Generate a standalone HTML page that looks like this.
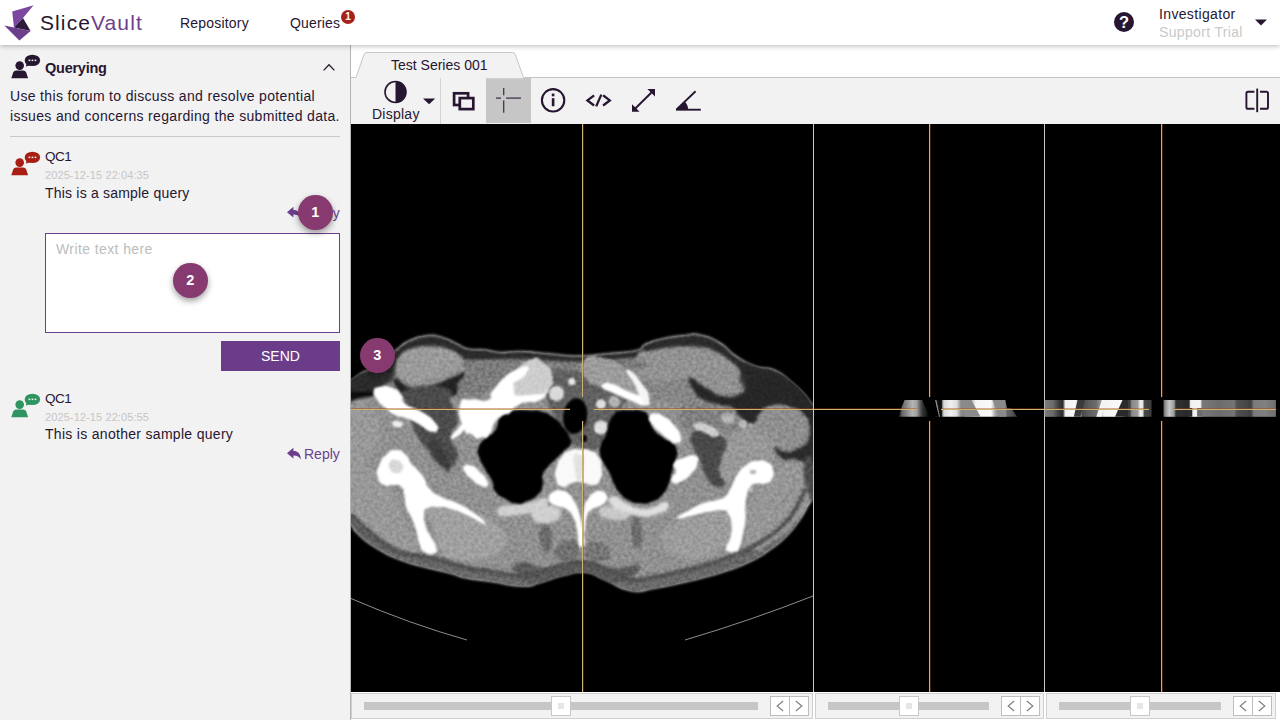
<!DOCTYPE html>
<html>
<head>
<meta charset="utf-8">
<title>SliceVault</title>
<style>
*{box-sizing:border-box;margin:0;padding:0}
html,body{width:1280px;height:720px;overflow:hidden;background:#fff;font-family:"Liberation Sans",sans-serif;color:#261631}
.abs{position:absolute}
#header{position:absolute;left:0;top:0;width:1280px;height:45px;background:#fff;box-shadow:0 1px 5px rgba(0,0,0,.28);z-index:5}
#sidebar{position:absolute;left:0;top:45px;width:351px;height:675px;background:#f2f2f2;border-right:1px solid #b4b4b4}
#main{position:absolute;left:351px;top:45px;width:929px;height:675px;background:#fff}
.t{position:absolute;white-space:nowrap;line-height:1}
#toolbar{position:absolute;left:0;top:32px;width:929px;height:47px;background:#f2f2f2;border-top:1px solid #c4c4c4}
#viewer{position:absolute;left:0;top:79px;width:929px;height:568px;background:#000;overflow:hidden}
.step{position:absolute;width:34.5px;height:35px;border-radius:50%;background:#863a6f;color:#fff;font-weight:bold;font-size:14.5px;text-align:center;line-height:35px;box-shadow:0 3px 6px rgba(0,0,0,.38);z-index:9}
.sl{position:absolute;top:648px;height:26px;background:#f2f2f2;border:1px solid #d0d0d0}
.sl .tr{position:absolute;top:8px;height:8px;background:#c6c6c6}
.sl .th{position:absolute;top:2px;width:20px;height:20px;background:#fff;border:1px solid #c8c8c8}
.sl .th i{position:absolute;left:6px;top:6px;width:6px;height:6px;background:#e6e6e6}
.sl .bt{position:absolute;top:2px;width:39px;height:20px;background:#fff;border:1px solid #bdbdbd}
.sl .bt:after{content:"";position:absolute;left:18px;top:0;width:1px;height:18px;background:#bdbdbd}
</style>
</head>
<body>
<!-- HEADER -->
<div id="header">
<svg class="abs" style="left:0;top:0" width="60" height="45" viewBox="0 0 60 45">
<polygon points="12.2,11.4 33.6,5.2 23,18 14,27.4" fill="#7b479f"/>
<polygon points="23,18 30.6,31 14,27.4" fill="#2d1a3d"/>
<polygon points="4.4,25.4 30.6,31 19.4,40.6" fill="#6c3f8c"/>
</svg>
<div class="t" id="lg1" style="left:40px;top:12px;font-size:21px;letter-spacing:1.1px;color:#261631">Slice<span style="color:#6c3f8c">Vault</span></div>
<div class="t" id="nav1" style="left:180px;top:16px;font-size:14px;letter-spacing:.2px">Repository</div>
<div class="t" id="nav2" style="left:290px;top:16px;font-size:14px;letter-spacing:.15px">Queries</div>
<div class="abs" style="left:341px;top:10px;width:14px;height:14px;border-radius:7px;background:#a8201a;color:#fff;font-size:10px;font-weight:bold;text-align:center;line-height:14px">1</div>
<svg class="abs" style="left:1113px;top:11px" width="22" height="22" viewBox="0 0 22 22"><circle cx="11" cy="11" r="10" fill="#261631"/><text x="11" y="16.7" font-family="Liberation Sans" font-weight="bold" font-size="16.5" text-anchor="middle" fill="#fff">?</text></svg>
<div class="t" id="inv" style="left:1159px;top:7px;font-size:14px;letter-spacing:.35px">Investigator</div>
<div class="t" id="sup" style="left:1159px;top:25px;font-size:14px;letter-spacing:.34px;color:#c9c9c9">Support Trial</div>
<svg class="abs" style="left:1254px;top:19px" width="14" height="8" viewBox="0 0 14 8"><polygon points="1,0.5 13,0.5 7,6.5" fill="#261631"/></svg>
</div>

<!-- SIDEBAR -->
<div id="sidebar">
<svg class="abs" style="left:9px;top:8px" width="34" height="28" viewBox="9 53 34 28">
<g fill="#261631"><ellipse cx="32.4" cy="60.4" rx="7.7" ry="5.7"/><polygon points="27,62 25.8,66.6 31,65"/><circle cx="19.7" cy="65.6" r="4.3"/><path d="M11.3 78.2 L13.2 72.6 Q14 70.6 16.2 70.6 L23.2 70.6 Q25.4 70.6 26.2 72.6 L28.1 78.2 Z"/></g>
<g fill="#f2f2f2"><rect x="28.6" y="59.6" width="1.7" height="1.5"/><rect x="31.6" y="59.6" width="1.7" height="1.5"/><rect x="34.6" y="59.6" width="1.7" height="1.5"/></g>
</svg>
<div class="t" id="qh" style="left:45px;top:15.5px;font-size:14.5px;letter-spacing:-.25px;font-weight:bold">Querying</div>
<svg class="abs" style="left:321px;top:16px" width="16" height="12" viewBox="0 0 16 12"><polyline points="2.6,9.4 8,3.7 13.4,9.4" fill="none" stroke="#261631" stroke-width="1.25"/></svg>
<div class="t" id="p1" style="left:10px;top:44px;font-size:14px;letter-spacing:.33px">Use this forum to discuss and resolve potential</div>
<div class="t" id="p2" style="left:10px;top:64px;font-size:14px;letter-spacing:.33px">issues and concerns regarding the submitted data.</div>
<div class="abs" style="left:10px;top:91px;width:330px;height:1px;background:#c9c9c9"></div>

<svg class="abs" style="left:9px;top:105.2px" width="34" height="28" viewBox="9 53 34 28">
<g fill="#a81e12"><ellipse cx="32.4" cy="60.4" rx="7.7" ry="5.7"/><polygon points="27,62 25.8,66.6 31,65"/><circle cx="19.7" cy="65.6" r="4.3"/><path d="M11.3 78.2 L13.2 72.6 Q14 70.6 16.2 70.6 L23.2 70.6 Q25.4 70.6 26.2 72.6 L28.1 78.2 Z"/></g>
<g fill="#f2f2f2"><rect x="28.6" y="59.6" width="1.7" height="1.5"/><rect x="31.6" y="59.6" width="1.7" height="1.5"/><rect x="34.6" y="59.6" width="1.7" height="1.5"/></g>
</svg>
<div class="t" id="q1n" style="left:45px;top:105px;font-size:13.5px;letter-spacing:-.5px">QC1</div>
<div class="t" id="q1d" style="left:45px;top:125px;font-size:11px;letter-spacing:.1px;color:#c6c6c6">2025-12-15 22:04:35</div>
<div class="t" id="q1t" style="left:45px;top:141px;font-size:14px;letter-spacing:.2px">This is a sample query</div>
<svg class="abs" style="left:286px;top:161px" width="16" height="14" viewBox="0 0 16 14"><path d="M1 6.2 L7.4 0.8 V4 C12 4 14.6 6.6 14.8 12.4 C13.4 9.6 11.4 8.4 7.4 8.4 V11.6 Z" fill="#6c3f8c"/></svg>
<div class="t" id="r1" style="left:304px;top:160.5px;font-size:14px;color:#6c3f8c">Reply</div>
<div class="abs" style="left:45px;top:188px;width:295px;height:100px;background:#fff;border:1px solid #6c3f8c"></div>
<div class="t" id="ph" style="left:56px;top:197px;font-size:14px;letter-spacing:.4px;color:#bdbdbd">Write text here</div>
<div class="abs" style="left:221px;top:296px;width:119px;height:30px;background:#6a3c8a"></div>
<div class="t" id="snd" style="left:261px;top:304px;font-size:14px;color:#fff">SEND</div>

<svg class="abs" style="left:9px;top:347.2px" width="34" height="28" viewBox="9 53 34 28">
<g fill="#2e9460"><ellipse cx="32.4" cy="60.4" rx="7.7" ry="5.7"/><polygon points="27,62 25.8,66.6 31,65"/><circle cx="19.7" cy="65.6" r="4.3"/><path d="M11.3 78.2 L13.2 72.6 Q14 70.6 16.2 70.6 L23.2 70.6 Q25.4 70.6 26.2 72.6 L28.1 78.2 Z"/></g>
<g fill="#f2f2f2"><rect x="28.6" y="59.6" width="1.7" height="1.5"/><rect x="31.6" y="59.6" width="1.7" height="1.5"/><rect x="34.6" y="59.6" width="1.7" height="1.5"/></g>
</svg>
<div class="t" id="q2n" style="left:45px;top:347px;font-size:13.5px;letter-spacing:-.5px">QC1</div>
<div class="t" id="q2d" style="left:45px;top:367px;font-size:11px;letter-spacing:.1px;color:#c6c6c6">2025-12-15 22:05:55</div>
<div class="t" id="q2t" style="left:45px;top:382px;font-size:14px;letter-spacing:.3px">This is another sample query</div>
<svg class="abs" style="left:286px;top:402px" width="16" height="14" viewBox="0 0 16 14"><path d="M1 6.2 L7.4 0.8 V4 C12 4 14.6 6.6 14.8 12.4 C13.4 9.6 11.4 8.4 7.4 8.4 V11.6 Z" fill="#6c3f8c"/></svg>
<div class="t" id="r2" style="left:304px;top:401.5px;font-size:14px;color:#6c3f8c">Reply</div>
<div class="step" style="left:298px;top:150px">1</div>
<div class="step" style="left:173px;top:218px">2</div>
</div>

<!-- MAIN -->
<div id="main">
<svg class="abs" style="left:0;top:0;z-index:2" width="200" height="34" viewBox="351 45 200 34"><path d="M355.8 78.2 L364 54.5 Q364.8 52.5 367 52.5 H512.5 Q514.6 52.5 515.3 54.5 L523.6 78.2 Z" fill="#f2f2f2"/><path d="M351 77.5 H356 L364 54.5 Q364.8 52.5 367 52.5 H512.5 Q514.6 52.5 515.3 54.5 L523.4 77.5" fill="none" stroke="#c6c6c6" stroke-width="1"/></svg>
<div class="t" id="tab" style="z-index:3;left:40px;top:13px;font-size:14px;letter-spacing:0">Test Series 001</div>
<div id="toolbar">
<svg class="abs" style="left:0;top:0" width="929" height="46" viewBox="351 78 929 46">
<g fill="none" stroke="#261631">
<circle cx="395.5" cy="92" r="10.5" stroke-width="1.6"/>
<path d="M395.5 81.5 A10.5 10.5 0 0 1 395.5 102.5 Z" fill="#261631" stroke="none"/>
<polygon points="423,98.4 435.2,98.4 429.1,104.3" fill="#261631" stroke="none"/>
<line x1="440.5" y1="78" x2="440.5" y2="124" stroke="#d2d2d2" stroke-width="1"/>
<rect x="454.1" y="93.3" width="14" height="11.7" stroke-width="2.7"/>
<rect x="459.8" y="98.1" width="13.5" height="11" stroke-width="2.7" fill="#f2f2f2"/>
<rect x="486" y="78" width="45" height="45" fill="#c6c6c6" stroke="none"/>
<g stroke="#44334d" stroke-width="1.3"><line x1="503.7" y1="88" x2="503.7" y2="95.2"/><line x1="503.7" y1="100.6" x2="503.7" y2="112.8"/><line x1="496" y1="98.1" x2="501" y2="98.1"/><line x1="506" y1="98.1" x2="521" y2="98.1"/></g>
<circle cx="553.1" cy="100.3" r="11.2" stroke-width="2.1"/>
<rect x="551.8" y="98.2" width="2.6" height="8" fill="#261631" stroke="none"/><rect x="551.8" y="93.6" width="2.6" height="2.7" fill="#261631" stroke="none"/>
<g stroke-width="2.3" stroke-linecap="square"><polyline points="593.2,96 587.4,100.4 593.2,104.8" stroke-linejoin="miter"/><polyline points="604,96 609.8,100.4 604,104.8"/><line x1="601.3" y1="94.6" x2="596.2" y2="106.4" stroke-linecap="butt"/></g>
<g stroke-width="1.9"><line x1="634" y1="109.8" x2="653" y2="91"/></g>
<polygon points="632,111.8 632,104.2 639.6,111.8" fill="#261631" stroke="none"/><polygon points="655,89 655,96.6 647.4,89" fill="#261631" stroke="none"/>
<g stroke-width="1.9"><line x1="676" y1="109.7" x2="700.8" y2="109.7"/><line x1="676.6" y1="109.4" x2="695.6" y2="91.2"/></g>
<path d="M676 109.7 L684.6 101.4 A12 12 0 0 1 688.2 109.7 Z" fill="#261631" stroke="none"/>
<g stroke-width="1.9" stroke-linejoin="round"><path d="M1254.4 91.7 H1248 Q1246.4 91.7 1246.4 93.3 V107.2 Q1246.4 108.8 1248 108.8 H1254.4"/><path d="M1260 91.7 H1266.4 Q1268 91.7 1268 93.3 V107.2 Q1268 108.8 1266.4 108.8 H1260"/><line x1="1257.2" y1="88.6" x2="1257.2" y2="112.2"/></g>
</g>
</svg>
<div class="t" id="disp" style="left:21px;top:29px;font-size:14px;letter-spacing:.25px">Display</div>
</div>

<div id="viewer">
<svg class="abs" style="left:0;top:0" width="929" height="568" viewBox="351 124 929 568">
<defs>
<filter id="b1" x="-10%" y="-10%" width="120%" height="120%"><feGaussianBlur stdDeviation="0.9"/></filter>
<filter id="b15" x="-10%" y="-10%" width="120%" height="120%"><feGaussianBlur stdDeviation="1.4"/></filter>
<filter id="b2" x="-10%" y="-10%" width="120%" height="120%"><feGaussianBlur stdDeviation="2"/></filter>
<filter id="b3" x="-20%" y="-20%" width="140%" height="140%"><feGaussianBlur stdDeviation="3.5"/></filter>
<linearGradient id="gbody" gradientUnits="userSpaceOnUse" x1="0" y1="335" x2="0" y2="590"><stop offset="0" stop-color="#2a2a2a"/><stop offset=".45" stop-color="#323232"/><stop offset=".8" stop-color="#646464"/><stop offset="1" stop-color="#6c6c6c"/></linearGradient>
<filter id="grain" x="0" y="0" width="100%" height="100%" color-interpolation-filters="sRGB"><feTurbulence type="fractalNoise" baseFrequency="0.28" numOctaves="2" seed="7" result="n"/><feColorMatrix in="n" type="matrix" values="0.45 0 0 0 0.275  0.45 0 0 0 0.275  0.45 0 0 0 0.275  0 0 0 0 1"/></filter>
<clipPath id="cp1"><rect x="351" y="124" width="462" height="568"/></clipPath>
</defs>
<g clip-path="url(#cp1)">
<!-- CT-START -->
<g filter="url(#b1)"><path d="M322.0 450.0 C322.0 419.6 324.4 409.5 330.0 392.0 C335.6 374.5 337.4 387.5 343.0 384.5 C348.6 381.5 345.5 384.1 351.0 380.6 C356.5 377.1 357.1 375.3 363.5 371.5 C369.9 367.7 366.1 372.5 375.0 366.5 C383.9 360.5 388.2 355.8 397.0 349.0 C405.8 342.2 400.5 344.6 408.0 341.0 C415.5 337.4 415.9 336.6 425.0 335.5 C434.1 334.4 433.5 334.9 442.0 337.0 C450.5 339.1 450.1 340.4 457.0 343.5 C463.9 346.6 460.5 346.9 468.0 348.5 C475.5 350.1 476.5 348.6 485.0 349.5 C493.5 350.4 490.7 351.6 500.0 352.0 C509.3 352.4 509.3 350.9 520.0 351.0 C530.7 351.1 528.0 351.4 540.0 352.5 C552.0 353.6 553.8 354.2 565.0 355.0 C576.2 355.8 570.0 356.0 582.0 355.5 C594.0 355.0 595.3 354.5 610.0 353.0 C624.7 351.5 627.7 352.4 637.0 350.0 C646.3 347.6 638.3 347.1 645.0 344.0 C651.7 340.9 651.3 340.9 662.0 338.5 C672.7 336.1 674.9 336.1 685.0 335.0 C695.1 333.9 690.7 332.5 700.0 334.5 C709.3 336.5 710.7 337.0 720.0 342.5 C729.3 348.0 725.7 348.7 735.0 355.0 C744.3 361.3 744.3 362.0 755.0 366.0 C765.7 370.0 765.1 365.6 775.0 370.0 C784.9 374.4 784.0 375.8 792.0 382.5 C800.0 389.2 799.4 389.0 805.0 395.0 C810.6 401.0 806.3 398.3 813.0 405.0 C819.7 411.7 825.5 400.0 830.0 420.0 C834.5 440.0 834.5 458.9 830.0 480.0 C825.5 501.1 821.0 488.3 813.0 499.0 C805.0 509.7 807.1 510.0 800.0 520.0 C792.9 530.0 794.5 528.5 786.5 536.5 C778.5 544.5 779.2 543.5 770.0 550.0 C760.8 556.5 762.7 555.7 752.0 561.0 C741.3 566.3 742.5 565.6 730.0 570.0 C717.5 574.4 718.3 573.9 705.0 577.5 C691.7 581.1 693.3 580.6 680.0 583.5 C666.7 586.4 668.3 586.5 655.0 588.5 C641.7 590.5 643.3 593.3 630.0 591.0 C616.7 588.7 617.0 584.9 605.0 580.0 C593.0 575.1 596.5 573.6 585.0 572.5 C573.5 571.4 574.0 573.2 562.0 576.0 C550.0 578.8 550.7 580.2 540.0 583.0 C529.3 585.8 534.8 586.8 522.0 586.5 C509.2 586.2 506.7 584.1 492.0 582.0 C477.3 579.9 478.2 580.8 467.0 578.5 C455.8 576.2 461.2 576.4 450.0 573.5 C438.8 570.6 438.3 571.1 425.0 567.5 C411.7 563.9 413.3 565.3 400.0 560.0 C386.7 554.7 386.3 554.5 375.0 547.5 C363.7 540.5 364.2 540.0 357.5 533.8 C350.8 527.5 354.7 529.3 350.0 524.0 C345.3 518.7 345.3 518.8 340.0 514.0 C334.7 509.2 334.8 523.1 330.0 506.0 C325.2 488.9 322.0 480.4 322.0 450.0 Z" fill="url(#gbody)" stroke="#909090" stroke-width="1.2"/></g>
<defs><clipPath id="body2"><path d="M322.0 450.0 C322.0 419.6 324.4 409.5 330.0 392.0 C335.6 374.5 337.4 387.5 343.0 384.5 C348.6 381.5 345.5 384.1 351.0 380.6 C356.5 377.1 357.1 375.3 363.5 371.5 C369.9 367.7 366.1 372.5 375.0 366.5 C383.9 360.5 388.2 355.8 397.0 349.0 C405.8 342.2 400.5 344.6 408.0 341.0 C415.5 337.4 415.9 336.6 425.0 335.5 C434.1 334.4 433.5 334.9 442.0 337.0 C450.5 339.1 450.1 340.4 457.0 343.5 C463.9 346.6 460.5 346.9 468.0 348.5 C475.5 350.1 476.5 348.6 485.0 349.5 C493.5 350.4 490.7 351.6 500.0 352.0 C509.3 352.4 509.3 350.9 520.0 351.0 C530.7 351.1 528.0 351.4 540.0 352.5 C552.0 353.6 553.8 354.2 565.0 355.0 C576.2 355.8 570.0 356.0 582.0 355.5 C594.0 355.0 595.3 354.5 610.0 353.0 C624.7 351.5 627.7 352.4 637.0 350.0 C646.3 347.6 638.3 347.1 645.0 344.0 C651.7 340.9 651.3 340.9 662.0 338.5 C672.7 336.1 674.9 336.1 685.0 335.0 C695.1 333.9 690.7 332.5 700.0 334.5 C709.3 336.5 710.7 337.0 720.0 342.5 C729.3 348.0 725.7 348.7 735.0 355.0 C744.3 361.3 744.3 362.0 755.0 366.0 C765.7 370.0 765.1 365.6 775.0 370.0 C784.9 374.4 784.0 375.8 792.0 382.5 C800.0 389.2 799.4 389.0 805.0 395.0 C810.6 401.0 806.3 398.3 813.0 405.0 C819.7 411.7 825.5 400.0 830.0 420.0 C834.5 440.0 834.5 458.9 830.0 480.0 C825.5 501.1 821.0 488.3 813.0 499.0 C805.0 509.7 807.1 510.0 800.0 520.0 C792.9 530.0 794.5 528.5 786.5 536.5 C778.5 544.5 779.2 543.5 770.0 550.0 C760.8 556.5 762.7 555.7 752.0 561.0 C741.3 566.3 742.5 565.6 730.0 570.0 C717.5 574.4 718.3 573.9 705.0 577.5 C691.7 581.1 693.3 580.6 680.0 583.5 C666.7 586.4 668.3 586.5 655.0 588.5 C641.7 590.5 643.3 593.3 630.0 591.0 C616.7 588.7 617.0 584.9 605.0 580.0 C593.0 575.1 596.5 573.6 585.0 572.5 C573.5 571.4 574.0 573.2 562.0 576.0 C550.0 578.8 550.7 580.2 540.0 583.0 C529.3 585.8 534.8 586.8 522.0 586.5 C509.2 586.2 506.7 584.1 492.0 582.0 C477.3 579.9 478.2 580.8 467.0 578.5 C455.8 576.2 461.2 576.4 450.0 573.5 C438.8 570.6 438.3 571.1 425.0 567.5 C411.7 563.9 413.3 565.3 400.0 560.0 C386.7 554.7 386.3 554.5 375.0 547.5 C363.7 540.5 364.2 540.0 357.5 533.8 C350.8 527.5 354.7 529.3 350.0 524.0 C345.3 518.7 345.3 518.8 340.0 514.0 C334.7 509.2 334.8 523.1 330.0 506.0 C325.2 488.9 322.0 480.4 322.0 450.0 Z"/></clipPath></defs>
<g clip-path="url(#body2)">
<g filter="url(#b1)"><path d="M322.0 450.0 C322.0 419.6 324.4 409.5 330.0 392.0 C335.6 374.5 337.4 387.5 343.0 384.5 C348.6 381.5 345.5 384.1 351.0 380.6 C356.5 377.1 357.1 375.3 363.5 371.5 C369.9 367.7 366.1 372.5 375.0 366.5 C383.9 360.5 388.2 355.8 397.0 349.0 C405.8 342.2 400.5 344.6 408.0 341.0 C415.5 337.4 415.9 336.6 425.0 335.5 C434.1 334.4 433.5 334.9 442.0 337.0 C450.5 339.1 450.1 340.4 457.0 343.5 C463.9 346.6 460.5 346.9 468.0 348.5 C475.5 350.1 476.5 348.6 485.0 349.5 C493.5 350.4 490.7 351.6 500.0 352.0 C509.3 352.4 509.3 350.9 520.0 351.0 C530.7 351.1 528.0 351.4 540.0 352.5 C552.0 353.6 553.8 354.2 565.0 355.0 C576.2 355.8 570.0 356.0 582.0 355.5 C594.0 355.0 595.3 354.5 610.0 353.0 C624.7 351.5 627.7 352.4 637.0 350.0 C646.3 347.6 638.3 347.1 645.0 344.0 C651.7 340.9 651.3 340.9 662.0 338.5 C672.7 336.1 674.9 336.1 685.0 335.0 C695.1 333.9 690.7 332.5 700.0 334.5 C709.3 336.5 710.7 337.0 720.0 342.5 C729.3 348.0 725.7 348.7 735.0 355.0 C744.3 361.3 744.3 362.0 755.0 366.0 C765.7 370.0 765.1 365.6 775.0 370.0 C784.9 374.4 784.0 375.8 792.0 382.5 C800.0 389.2 799.4 389.0 805.0 395.0 C810.6 401.0 806.3 398.3 813.0 405.0 C819.7 411.7 825.5 400.0 830.0 420.0 C834.5 440.0 834.5 458.9 830.0 480.0 C825.5 501.1 821.0 488.3 813.0 499.0 C805.0 509.7 807.1 510.0 800.0 520.0 C792.9 530.0 794.5 528.5 786.5 536.5 C778.5 544.5 779.2 543.5 770.0 550.0 C760.8 556.5 762.7 555.7 752.0 561.0 C741.3 566.3 742.5 565.6 730.0 570.0 C717.5 574.4 718.3 573.9 705.0 577.5 C691.7 581.1 693.3 580.6 680.0 583.5 C666.7 586.4 668.3 586.5 655.0 588.5 C641.7 590.5 643.3 593.3 630.0 591.0 C616.7 588.7 617.0 584.9 605.0 580.0 C593.0 575.1 596.5 573.6 585.0 572.5 C573.5 571.4 574.0 573.2 562.0 576.0 C550.0 578.8 550.7 580.2 540.0 583.0 C529.3 585.8 534.8 586.8 522.0 586.5 C509.2 586.2 506.7 584.1 492.0 582.0 C477.3 579.9 478.2 580.8 467.0 578.5 C455.8 576.2 461.2 576.4 450.0 573.5 C438.8 570.6 438.3 571.1 425.0 567.5 C411.7 563.9 413.3 565.3 400.0 560.0 C386.7 554.7 386.3 554.5 375.0 547.5 C363.7 540.5 364.2 540.0 357.5 533.8 C350.8 527.5 354.7 529.3 350.0 524.0 C345.3 518.7 345.3 518.8 340.0 514.0 C334.7 509.2 334.8 523.1 330.0 506.0 C325.2 488.9 322.0 480.4 322.0 450.0 Z" fill="url(#gbody)" stroke="#787878" stroke-width="2.2"/></g>
<g filter="url(#b2)">
<path d="M324.0 450.0 C324.0 419.3 324.7 422.3 330.0 406.0 C335.3 389.7 329.3 405.3 340.0 401.0 C350.7 396.7 348.7 397.7 362.0 393.0 C375.3 388.3 369.7 391.7 380.0 387.0 C390.3 382.3 387.3 386.7 393.0 379.0 C398.7 371.3 392.0 372.8 397.0 364.0 C402.0 355.2 398.3 358.0 408.0 352.5 C417.7 347.0 413.3 348.5 426.0 347.5 C438.7 346.5 434.7 346.3 446.0 349.5 C457.3 352.7 452.0 352.8 460.0 357.0 C468.0 361.2 460.0 360.7 470.0 362.0 C480.0 363.3 473.3 361.7 490.0 361.0 C506.7 360.3 496.7 359.7 520.0 360.0 C543.3 360.3 539.3 361.2 560.0 362.0 C580.7 362.8 565.3 362.8 582.0 362.5 C598.7 362.2 592.0 362.5 610.0 361.0 C628.0 359.5 622.7 360.7 636.0 358.0 C649.3 355.3 639.3 356.2 650.0 353.0 C660.7 349.8 655.3 350.5 668.0 348.5 C680.7 346.5 676.0 347.0 688.0 347.0 C700.0 347.0 694.7 346.3 704.0 348.5 C713.3 350.7 708.0 349.3 716.0 353.5 C724.0 357.7 721.0 355.5 728.0 361.0 C735.0 366.5 733.0 363.7 737.0 370.0 C741.0 376.3 736.3 372.7 740.0 380.0 C743.7 387.3 741.3 384.7 748.0 392.0 C754.7 399.3 751.0 397.7 760.0 402.0 C769.0 406.3 765.0 403.3 775.0 405.0 C785.0 406.7 780.7 404.3 790.0 407.0 C799.3 409.7 796.3 407.3 803.0 413.0 C809.7 418.7 801.0 417.0 810.0 424.0 C819.0 431.0 823.3 416.7 830.0 434.0 C836.7 451.3 838.3 456.0 830.0 476.0 C821.7 496.0 816.7 482.7 805.0 494.0 C793.3 505.3 803.0 499.0 795.0 510.0 C787.0 521.0 791.0 517.3 781.0 527.0 C771.0 536.7 776.7 531.3 765.0 539.0 C753.3 546.7 759.7 543.3 746.0 550.0 C732.3 556.7 739.0 553.7 724.0 559.0 C709.0 564.3 716.7 561.7 701.0 566.0 C685.3 570.3 693.0 568.3 677.0 572.0 C661.0 575.7 668.0 574.7 653.0 577.0 C638.0 579.3 647.0 581.7 632.0 579.0 C617.0 576.3 623.3 574.8 608.0 569.0 C592.7 563.2 601.3 563.2 586.0 561.5 C570.7 559.8 577.3 560.8 562.0 564.0 C546.7 567.2 553.7 567.5 540.0 571.0 C526.3 574.5 537.0 574.7 521.0 574.5 C505.0 574.3 509.7 573.0 492.0 570.5 C474.3 568.0 481.3 569.8 468.0 567.0 C454.7 564.2 465.3 565.7 452.0 562.0 C438.7 558.3 444.0 559.2 428.0 556.0 C412.0 552.8 418.0 556.8 404.0 552.5 C390.0 548.2 398.0 550.8 386.0 543.0 C374.0 535.2 380.0 539.0 368.0 529.0 C356.0 519.0 359.3 521.0 350.0 513.0 C340.7 505.0 346.7 510.0 340.0 505.0 C333.3 500.0 335.3 516.3 330.0 498.0 C324.7 479.7 324.0 480.7 324.0 450.0 Z" fill="#909090"/>
</g>
<g filter="url(#b15)">
<path d="M396.5 367.5 C396.7 360.3 395.0 362.2 400.5 356.0 C406.0 349.8 402.3 351.7 413.0 348.8 C423.7 345.9 420.3 346.8 432.5 347.3 C444.7 347.8 440.5 347.3 449.5 350.2 C458.5 353.1 455.2 351.4 459.5 356.0 C463.8 360.6 463.2 359.3 462.5 364.0 C461.8 368.7 463.3 366.3 457.5 370.0 C451.7 373.7 454.2 372.0 445.0 375.0 C435.8 378.0 437.5 376.5 430.0 379.0 C422.5 381.5 429.2 381.3 422.5 382.5 C415.8 383.7 417.5 384.2 410.0 382.5 C402.5 380.8 404.5 382.5 400.0 377.5 C395.5 372.5 396.3 374.7 396.5 367.5 Z" fill="#9a9a9a"/>
<path d="M637.5 356.0 C640.0 347.0 640.8 353.2 655.0 350.5 C669.2 347.8 665.0 348.7 680.0 348.0 C695.0 347.3 689.3 347.7 700.0 348.5 C710.7 349.3 702.0 346.2 712.0 350.5 C722.0 354.8 720.8 354.5 730.0 361.5 C739.2 368.5 737.7 365.3 739.5 371.5 C741.3 377.7 740.7 374.8 735.5 380.0 C730.3 385.2 731.8 386.5 724.0 387.0 C716.2 387.5 720.3 385.3 712.0 381.5 C703.7 377.7 709.7 377.3 699.0 375.5 C688.3 373.7 692.2 374.5 680.0 376.0 C667.8 377.5 673.3 379.5 662.5 380.0 C651.7 380.5 655.8 385.5 647.5 377.5 C639.2 369.5 635.0 365.0 637.5 356.0 Z" fill="#929292"/>
<path d="M761.3 413.3 C764.6 407.9 763.5 407.7 773.0 405.5 C782.5 403.3 779.7 404.1 789.7 406.7 C799.7 409.3 796.3 406.1 803.0 413.3 C809.7 420.5 808.6 419.1 809.7 428.3 C810.8 437.5 810.8 434.9 806.3 441.0 C801.8 447.1 803.0 443.5 796.3 446.5 C789.6 449.5 791.8 450.2 786.3 450.0 C780.8 449.8 783.0 450.4 779.7 446.0 C776.4 441.6 779.6 442.0 776.3 436.7 C773.0 431.4 774.1 435.0 769.7 430.0 C765.3 425.0 765.8 427.3 763.0 421.7 C760.2 416.1 758.0 418.7 761.3 413.3 Z" fill="#8e8e8e"/>
<path d="M726.3 446.7 C731.8 438.9 729.6 440.6 736.3 435.0 C743.0 429.4 738.5 430.6 746.3 430.0 C754.1 429.4 751.9 428.9 759.7 433.3 C767.5 437.7 765.3 436.6 769.7 443.3 C774.1 450.0 773.0 447.7 773.0 453.3 C773.0 458.9 775.3 458.3 769.7 460.0 C764.1 461.7 764.1 457.2 756.3 458.3 C748.5 459.4 753.0 458.3 746.3 463.3 C739.6 468.3 743.0 466.6 736.3 473.3 C729.6 480.0 731.8 483.3 726.3 483.3 C720.8 483.3 721.9 481.6 719.7 473.3 C717.5 465.0 717.5 467.2 719.7 458.3 C721.9 449.4 720.8 454.5 726.3 446.7 Z" fill="#989898"/>
<path d="M432.0 506.0 C444.0 500.0 447.3 504.7 470.0 512.0 C492.7 519.3 488.7 517.0 500.0 528.0 C511.3 539.0 507.3 535.7 504.0 545.0 C500.7 554.3 504.7 551.0 490.0 556.0 C475.3 561.0 476.0 561.3 460.0 560.0 C444.0 558.7 450.7 562.0 442.0 552.0 C433.3 542.0 437.3 545.3 434.0 530.0 C430.7 514.7 420.0 512.0 432.0 506.0 Z" fill="#a0a0a0"/>
<path d="M668.0 528.0 C680.0 518.3 680.0 520.7 700.0 516.0 C720.0 511.3 717.0 507.7 728.0 514.0 C739.0 520.3 735.0 523.7 733.0 535.0 C731.0 546.3 733.0 540.3 722.0 548.0 C711.0 555.7 714.7 555.3 700.0 558.0 C685.3 560.7 690.0 560.3 678.0 556.0 C666.0 551.7 667.3 554.3 664.0 545.0 C660.7 535.7 656.0 537.7 668.0 528.0 Z" fill="#9c9c9c"/>
<path d="M351.0 470.0 C358.0 456.0 358.3 462.7 372.0 470.0 C385.7 477.3 381.3 475.3 392.0 492.0 C402.7 508.7 396.0 501.3 404.0 520.0 C412.0 538.7 418.7 538.7 416.0 548.0 C413.3 557.3 410.7 553.3 396.0 548.0 C381.3 542.7 387.0 544.0 372.0 532.0 C357.0 520.0 358.0 532.7 351.0 512.0 C344.0 491.3 344.0 484.0 351.0 470.0 Z" fill="#989898"/>
<path d="M780.0 470.0 C794.7 458.7 789.3 462.0 800.0 462.0 C810.7 462.0 808.0 457.3 812.0 470.0 C816.0 482.7 817.3 482.7 812.0 500.0 C806.7 517.3 808.3 508.7 796.0 522.0 C783.7 535.3 789.7 531.3 775.0 540.0 C760.3 548.7 761.0 554.7 752.0 548.0 C743.0 541.3 746.7 537.3 748.0 520.0 C749.3 502.7 745.3 512.7 756.0 496.0 C766.7 479.3 765.3 481.3 780.0 470.0 Z" fill="#969696"/>
<path d="M351.0 410.0 C358.0 393.3 362.3 405.3 372.0 412.0 C381.7 418.7 379.3 416.7 380.0 430.0 C380.7 443.3 380.7 441.3 374.0 452.0 C367.3 462.7 367.7 458.7 360.0 462.0 C352.3 465.3 354.0 479.3 351.0 462.0 C348.0 444.7 344.0 426.7 351.0 410.0 Z" fill="#989898"/>
</g>
<g filter="url(#b15)">
<path d="M395.0 378.5 C399.2 376.8 400.0 385.3 412.5 387.5 C425.0 389.7 418.3 388.8 432.5 385.0 C446.7 381.2 444.2 379.8 455.0 376.0 C465.8 372.2 463.3 368.8 465.0 373.5 C466.7 378.2 465.0 382.0 460.0 390.0 C455.0 398.0 459.2 393.3 450.0 397.5 C440.8 401.7 445.0 401.7 432.5 402.5 C420.0 403.3 423.3 403.3 412.5 400.0 C401.7 396.7 405.8 399.7 400.0 392.5 C394.2 385.3 390.8 380.2 395.0 378.5 Z" fill="#222222"/>
<path d="M340.0 380.0 C346.7 370.7 348.3 375.8 360.0 374.0 C371.7 372.2 367.3 371.8 375.0 374.5 C382.7 377.2 382.7 376.8 383.0 382.0 C383.3 387.2 382.0 385.5 376.0 390.0 C370.0 394.5 377.0 391.5 365.0 395.5 C353.0 399.5 348.3 407.2 340.0 402.0 C331.7 396.8 333.3 389.3 340.0 380.0 Z" fill="#2c2c2c"/>
<path d="M340.0 393.0 C346.7 390.2 348.7 391.8 360.0 391.5 C371.3 391.2 368.7 390.8 374.0 392.0 C379.3 393.2 380.0 393.0 376.0 395.0 C372.0 397.0 374.0 396.3 362.0 398.0 C350.0 399.7 347.3 401.7 340.0 400.0 C332.7 398.3 333.3 395.8 340.0 393.0 Z" fill="#0c0c0c"/>
<path d="M637.5 381.0 C645.8 376.3 645.0 381.3 662.5 381.0 C680.0 380.7 674.8 376.7 690.0 380.0 C705.2 383.3 698.7 383.5 708.0 391.0 C717.3 398.5 719.0 397.0 718.0 402.5 C717.0 408.0 719.3 407.5 705.0 407.5 C690.7 407.5 693.3 405.0 675.0 402.5 C656.7 400.0 662.5 402.5 650.0 400.0 C637.5 397.5 641.7 401.3 637.5 395.0 C633.3 388.7 629.2 385.7 637.5 381.0 Z" fill="#868686"/>
<path d="M690.0 378.0 C695.0 377.7 697.0 383.0 708.0 389.0 C719.0 395.0 712.4 394.3 723.0 396.0 C733.6 397.7 731.9 397.3 739.7 394.0 C747.5 390.7 742.9 392.0 746.3 386.0 C749.7 380.0 742.1 380.7 750.0 376.0 C757.9 371.3 756.3 370.7 770.0 372.0 C783.7 373.3 780.0 374.0 791.0 380.0 C802.0 386.0 796.2 382.8 803.0 390.0 C809.8 397.2 807.0 394.4 811.3 401.7 C815.6 409.0 818.8 410.6 816.0 412.0 C813.2 413.4 812.9 408.7 803.0 406.0 C793.1 403.3 797.4 404.2 786.3 404.0 C775.2 403.8 778.6 402.4 769.7 405.5 C760.8 408.6 765.3 407.4 759.7 413.3 C754.1 419.2 759.7 422.2 753.0 423.3 C746.3 424.4 746.4 421.7 739.7 416.7 C733.0 411.7 739.7 412.2 733.0 408.3 C726.3 404.4 729.7 407.8 719.7 405.0 C709.7 402.2 711.9 405.0 703.0 400.0 C694.1 395.0 697.3 397.3 693.0 390.0 C688.7 382.7 685.0 378.3 690.0 378.0 Z" fill="#262626"/>
<path d="M742.0 364.0 C746.0 361.3 748.0 364.7 760.0 368.0 C772.0 371.3 767.3 368.0 778.0 374.0 C788.7 380.0 783.3 378.0 792.0 386.0 C800.7 394.0 797.0 390.7 804.0 398.0 C811.0 405.3 809.0 394.0 813.0 408.0 C817.0 422.0 816.0 420.7 816.0 440.0 C816.0 459.3 816.3 462.0 813.0 466.0 C809.7 470.0 807.1 464.7 806.0 452.0 C804.9 439.3 810.7 441.0 809.7 428.0 C808.7 415.0 809.6 420.3 803.0 413.0 C796.4 405.7 799.3 410.3 790.0 406.0 C780.7 401.7 785.0 406.0 775.0 400.0 C765.0 394.0 769.0 396.0 760.0 388.0 C751.0 380.0 754.0 384.0 748.0 376.0 C742.0 368.0 738.0 366.7 742.0 364.0 Z" fill="#282828"/>
<path d="M774.7 447.5 C775.8 445.2 779.1 451.5 786.3 452.0 C793.5 452.5 789.6 451.7 796.3 449.0 C803.0 446.3 800.1 447.0 806.3 444.0 C812.5 441.0 812.1 433.3 815.0 440.0 C817.9 446.7 819.0 456.7 815.0 464.0 C811.0 471.3 810.3 463.7 803.0 462.0 C795.7 460.3 799.7 460.0 793.0 459.0 C786.3 458.0 789.1 462.8 783.0 459.0 C776.9 455.2 773.6 449.8 774.7 447.5 Z" fill="#2c2c2c"/>
<path d="M804.0 464.0 C805.7 454.0 809.3 450.7 813.0 462.0 C816.7 473.3 816.7 488.0 815.0 498.0 C813.3 508.0 811.7 503.3 808.0 492.0 C804.3 480.7 802.3 474.0 804.0 464.0 Z" fill="#484848"/>
<path d="M406.0 390.0 C418.8 384.9 429.3 383.6 444.3 388.0 C459.3 392.4 446.5 392.6 451.0 403.3 C455.5 414.0 457.7 408.9 457.7 420.0 C457.7 431.1 451.0 424.5 451.0 436.7 C451.0 448.9 459.9 446.7 457.7 456.7 C455.5 466.7 453.2 467.8 444.3 466.7 C435.4 465.6 439.9 463.3 431.0 453.3 C422.1 443.3 424.4 447.8 417.7 436.7 C411.0 425.6 414.9 431.1 411.0 420.0 C407.1 408.9 407.7 413.3 406.0 403.3 C404.3 393.3 393.2 395.1 406.0 390.0 Z" fill="#4c4c4c"/>
<path d="M432.0 440.0 C436.7 439.3 438.0 440.0 444.0 450.0 C450.0 460.0 451.3 465.0 450.0 470.0 C448.7 475.0 446.7 471.0 440.0 465.0 C433.3 459.0 432.7 460.3 430.0 452.0 C427.3 443.7 427.3 440.7 432.0 440.0 Z" fill="#3e3e3e"/>
<path d="M691.3 435.0 C694.6 429.4 693.5 430.0 703.0 430.0 C712.5 430.0 711.9 429.4 719.7 435.0 C727.5 440.6 726.3 438.9 726.3 446.7 C726.3 454.5 721.9 449.4 719.7 458.3 C717.5 467.2 718.0 465.0 719.7 473.3 C721.4 481.6 725.8 478.8 724.7 483.3 C723.6 487.8 722.4 488.9 716.3 486.7 C710.2 484.5 711.8 485.6 706.3 476.7 C700.8 467.8 704.1 470.0 699.7 460.0 C695.3 450.0 695.8 455.0 693.0 446.7 C690.2 438.4 688.0 440.6 691.3 435.0 Z" fill="#4a4a4a"/>
<path d="M680.0 408.0 C686.7 402.7 686.0 404.0 700.0 404.0 C714.0 404.0 710.7 404.7 722.0 408.0 C733.3 411.3 728.7 408.0 734.0 414.0 C739.3 420.0 740.7 420.0 738.0 426.0 C735.3 432.0 736.7 431.3 726.0 432.0 C715.3 432.7 718.0 428.7 706.0 428.0 C694.0 427.3 698.7 432.7 690.0 430.0 C681.3 427.3 683.3 427.3 680.0 420.0 C676.7 412.7 673.3 413.3 680.0 408.0 Z" fill="#808080"/>
<path d="M458.0 392.0 C461.3 384.7 464.0 388.0 476.0 380.0 C488.0 372.0 484.7 370.7 494.0 368.0 C503.3 365.3 503.3 365.3 504.0 372.0 C504.7 378.7 504.0 379.3 496.0 388.0 C488.0 396.7 490.0 393.3 480.0 398.0 C470.0 402.7 473.3 404.0 466.0 402.0 C458.7 400.0 454.7 399.3 458.0 392.0 Z" fill="#888888"/>
<path d="M700.0 440.0 C698.0 443.3 706.7 440.7 712.0 450.0 C717.3 459.3 712.7 466.3 716.0 468.0 C719.3 469.7 721.3 464.3 722.0 455.0 C722.7 445.7 725.3 445.0 718.0 440.0 C710.7 435.0 702.0 436.7 700.0 440.0 Z" fill="#4a4a4a"/>
<path d="M520.0 562.0 C530.0 559.0 529.3 568.0 550.0 568.0 C570.7 568.0 562.0 562.0 582.0 562.0 C602.0 562.0 590.7 566.7 610.0 568.0 C629.3 569.3 639.3 560.7 640.0 566.0 C640.7 571.3 631.3 581.7 612.0 584.0 C592.7 586.3 602.7 573.0 582.0 573.0 C561.3 573.0 570.7 582.7 550.0 584.0 C529.3 585.3 530.0 584.3 520.0 577.0 C510.0 569.7 510.0 565.0 520.0 562.0 Z" fill="#5a5a5a"/>
<path d="M462.0 362.0 C466.7 358.0 467.3 360.5 480.0 360.0 C492.7 359.5 480.0 360.0 500.0 360.5 C520.0 361.0 512.7 360.7 540.0 361.5 C567.3 362.3 550.0 363.5 582.0 363.0 C614.0 362.5 616.7 358.0 636.0 360.0 C655.3 362.0 652.0 365.0 640.0 369.0 C628.0 373.0 619.3 370.3 600.0 372.0 C580.7 373.7 595.3 372.0 582.0 374.0 C568.7 376.0 575.7 380.7 560.0 378.0 C544.3 375.3 551.7 366.7 535.0 366.0 C518.3 365.3 525.0 368.0 510.0 376.0 C495.0 384.0 503.3 383.3 490.0 390.0 C476.7 396.7 480.7 396.7 470.0 396.0 C459.3 395.3 459.3 396.0 458.0 388.0 C456.7 380.0 464.7 380.7 466.0 372.0 C467.3 363.3 457.3 366.0 462.0 362.0 Z" fill="#7c7c7c"/>
<path d="M548.0 372.0 C555.3 367.3 554.7 370.0 566.0 370.0 C577.3 370.0 570.7 371.3 582.0 372.0 C593.3 372.7 586.7 370.0 600.0 372.0 C613.3 374.0 612.7 371.3 622.0 378.0 C631.3 384.7 628.0 382.0 628.0 392.0 C628.0 402.0 627.3 398.7 622.0 408.0 C616.7 417.3 616.7 410.7 612.0 420.0 C607.3 429.3 612.0 427.3 608.0 436.0 C604.0 444.7 606.0 441.3 600.0 446.0 C594.0 450.7 598.0 450.0 590.0 450.0 C582.0 450.0 584.0 449.3 576.0 446.0 C568.0 442.7 571.3 446.0 566.0 440.0 C560.7 434.0 564.7 437.3 560.0 428.0 C555.3 418.7 556.7 422.0 552.0 412.0 C547.3 402.0 548.7 407.3 546.0 398.0 C543.3 388.7 543.3 392.7 544.0 384.0 C544.7 375.3 540.7 376.7 548.0 372.0 Z" fill="#606060"/>
</g>
<g filter="url(#b15)">
<path d="M540.0 528.0 C542.0 520.0 544.0 520.0 548.0 524.0 C552.0 528.0 552.0 530.7 552.0 540.0 C552.0 549.3 551.3 549.3 548.0 552.0 C544.7 554.7 544.7 556.0 542.0 548.0 C539.3 540.0 538.0 536.0 540.0 528.0 Z" fill="#6c6c6c"/>
<path d="M632.0 520.0 C633.7 512.7 634.7 512.7 638.0 518.0 C641.3 523.3 642.0 526.0 642.0 536.0 C642.0 546.0 641.0 546.7 638.0 548.0 C635.0 549.3 635.0 549.3 633.0 540.0 C631.0 530.7 630.3 527.3 632.0 520.0 Z" fill="#6a6a6a"/>
<path d="M556.0 548.0 C560.0 541.3 564.0 540.0 572.0 540.0 C580.0 540.0 580.0 541.3 580.0 548.0 C580.0 554.7 578.7 556.0 572.0 560.0 C565.3 564.0 565.3 564.0 560.0 560.0 C554.7 556.0 552.0 554.7 556.0 548.0 Z" fill="#707070"/>
<path d="M586.0 548.0 C588.7 542.0 590.0 540.7 598.0 542.0 C606.0 543.3 608.7 545.3 610.0 552.0 C611.3 558.7 608.7 559.3 602.0 562.0 C595.3 564.7 595.3 564.7 590.0 560.0 C584.7 555.3 583.3 554.0 586.0 548.0 Z" fill="#747474"/>
</g>
<path d="M773 513.5 Q784 502 795 486.5" stroke="#8c8c8c" stroke-width="1.3" fill="none"/>
<path d="M361 495 Q368 503 376 510" stroke="#929292" stroke-width="1.2" fill="none"/>
<g filter="url(#b15)"><path d="M806.0 488.0 C803.3 493.3 802.4 497.9 796.0 508.0 C789.6 518.1 790.0 517.9 782.0 526.0 C774.0 534.1 775.3 532.2 766.0 538.5 C756.7 544.8 757.9 544.0 747.0 549.5 C736.1 555.0 737.3 554.5 725.0 559.0 C712.7 563.5 713.8 562.9 701.0 566.5 C688.2 570.1 689.8 569.6 677.0 572.5 C664.2 575.4 665.0 575.5 653.0 577.5 C641.0 579.5 644.0 581.9 632.0 580.0 C620.0 578.1 620.3 575.0 608.0 570.5 C595.7 566.0 598.3 564.3 586.0 563.0 C573.7 561.7 574.3 563.0 562.0 565.5 C549.7 568.0 550.9 569.7 540.0 572.5 C529.1 575.3 533.8 576.1 521.0 576.0 C508.2 575.9 506.1 574.0 492.0 572.0 C477.9 570.0 478.7 570.8 468.0 568.5 C457.3 566.2 462.7 566.4 452.0 563.5 C441.3 560.6 440.8 560.2 428.0 557.5 C415.2 554.8 415.2 557.0 404.0 553.5 C392.8 550.0 395.6 550.6 386.0 544.5 C376.4 538.4 377.3 538.4 368.0 530.5 C358.7 522.6 355.5 519.1 351.0 515.0" fill="none" stroke="#505050" stroke-width="4.5" stroke-linejoin="round"/></g>
<g filter="url(#b1)">
<circle cx="556.5" cy="393.3" r="7.6" fill="#dadada"/><circle cx="571.8" cy="381.7" r="3.6" fill="#e8e8e8"/><circle cx="601" cy="404.2" r="5" fill="#e0e0e0"/><circle cx="601" cy="427.5" r="7" fill="#dedede"/><circle cx="614.3" cy="401.7" r="6" fill="#b2b2b2"/><circle cx="596" cy="430.8" r="1.3" fill="#fff"/><ellipse cx="728" cy="418.5" rx="7" ry="5.5" fill="#b4b4b4"/><circle cx="743" cy="424" r="4" fill="#b8b8b8"/><circle cx="750.5" cy="424.7" r="1.2" fill="#eee"/>
</g>
<g filter="url(#b15)">
<path d="M500.0 507.0 C504.7 504.0 502.7 506.3 512.0 505.0 C521.3 503.7 517.3 505.3 528.0 503.0 C538.7 500.7 537.3 498.0 544.0 498.0 C550.7 498.0 549.3 499.0 548.0 503.0 C546.7 507.0 548.0 506.3 540.0 510.0 C532.0 513.7 535.3 512.0 524.0 514.0 C512.7 516.0 514.7 516.0 506.0 516.0 C497.3 516.0 500.0 517.0 498.0 514.0 C496.0 511.0 495.3 510.0 500.0 507.0 Z" fill="#cfcfcf"/>
<path d="M534.0 510.0 C538.3 506.2 538.0 507.2 546.0 506.5 C554.0 505.8 553.3 504.8 558.0 508.0 C562.7 511.2 562.0 511.3 560.0 516.0 C558.0 520.7 558.7 519.7 552.0 522.0 C545.3 524.3 546.3 524.3 540.0 523.0 C533.7 521.7 535.0 522.3 533.0 518.0 C531.0 513.7 529.7 513.8 534.0 510.0 Z" fill="#d0d0d0"/>
<path d="M601.0 508.0 C605.0 505.5 603.7 505.8 612.0 506.5 C620.3 507.2 620.7 506.5 626.0 510.0 C631.3 513.5 630.7 513.7 628.0 517.0 C625.3 520.3 625.3 519.7 618.0 520.0 C610.7 520.3 612.0 520.0 606.0 518.0 C600.0 516.0 601.7 517.3 600.0 514.0 C598.3 510.7 597.0 510.5 601.0 508.0 Z" fill="#cacaca"/>
<path d="M609.0 499.0 C610.3 496.3 610.3 495.7 616.0 497.0 C621.7 498.3 618.0 499.2 626.0 503.0 C634.0 506.8 630.7 507.2 640.0 508.5 C649.3 509.8 646.0 509.2 654.0 507.0 C662.0 504.8 659.3 501.7 664.0 502.0 C668.7 502.3 670.7 503.8 668.0 508.0 C665.3 512.2 665.3 511.8 656.0 514.5 C646.7 517.2 650.7 517.2 640.0 516.0 C629.3 514.8 633.3 514.7 624.0 511.0 C614.7 507.3 617.0 509.0 612.0 505.0 C607.0 501.0 607.7 501.7 609.0 499.0 Z" fill="#e0e0e0"/>
</g>
<g filter="url(#b1)">
<path d="M498.9 419.5 C502.1 413.8 499.7 416.5 504.7 413.5 C509.7 410.5 505.6 411.6 514.0 410.6 C522.4 409.6 521.0 410.1 530.0 410.4 C539.0 410.7 533.3 409.2 541.0 411.4 C548.7 413.6 545.3 411.4 553.0 417.0 C560.7 422.6 558.4 421.2 564.0 428.3 C569.6 435.4 567.7 433.0 569.9 438.3 C572.1 443.6 572.2 440.3 570.6 444.2 C569.0 448.1 569.5 445.5 565.0 450.0 C560.5 454.5 563.0 452.0 557.2 457.8 C551.4 463.6 552.3 461.7 547.5 467.5 C542.7 473.3 544.3 469.5 542.7 475.3 C541.1 481.1 544.3 478.5 542.7 485.0 C541.1 491.5 543.3 489.2 537.8 494.7 C532.3 500.2 533.2 498.6 526.1 501.5 C519.0 504.4 523.5 504.5 516.4 503.5 C509.3 502.5 511.8 502.8 504.7 498.6 C497.6 494.4 499.2 496.7 495.0 490.9 C490.8 485.1 495.3 488.2 492.1 481.1 C488.9 474.0 489.5 477.3 485.3 469.5 C481.1 461.7 481.7 464.9 479.4 457.8 C477.1 450.7 476.5 454.6 478.5 448.1 C480.5 441.6 479.8 444.1 485.3 438.3 C490.8 432.5 490.5 436.9 495.0 430.6 C499.5 424.3 495.7 425.2 498.9 419.5 Z" fill="#000"/>
<path d="M613.5 415.0 C616.7 411.3 613.5 412.4 619.0 410.8 C624.5 409.2 622.7 410.3 630.0 410.3 C637.3 410.3 634.7 408.7 641.0 410.8 C647.3 412.9 645.0 410.7 649.0 416.5 C653.0 422.3 648.3 421.3 653.0 428.3 C657.7 435.3 656.7 432.7 663.0 437.5 C669.3 442.3 667.4 438.6 672.0 442.8 C676.6 447.0 675.5 444.4 676.8 450.0 C678.1 455.6 677.5 452.6 675.9 459.7 C674.3 466.8 674.3 463.6 672.0 471.4 C669.7 479.2 672.3 475.3 669.1 483.1 C665.9 490.9 667.8 488.6 662.3 494.7 C656.8 500.8 659.6 498.6 652.5 501.5 C645.4 504.4 648.7 503.8 640.9 503.5 C633.1 503.2 636.3 504.2 629.2 500.6 C622.1 497.0 624.7 498.6 619.5 492.8 C614.3 487.0 616.9 489.6 613.6 483.1 C610.3 476.6 612.9 479.9 609.7 473.4 C606.5 466.9 607.1 470.1 603.9 463.6 C600.7 457.1 601.0 460.4 600.0 453.9 C599.0 447.4 599.0 450.7 601.0 444.2 C603.0 437.7 603.1 441.9 605.9 434.5 C608.7 427.1 606.8 428.5 609.3 422.0 C611.8 415.5 610.3 418.7 613.5 415.0 Z" fill="#000"/>
<ellipse cx="575.2" cy="416" rx="12" ry="17.8" transform="rotate(8 575.2 416)" fill="#000"/><ellipse cx="584.5" cy="438.5" rx="2.4" ry="3.8" fill="#000"/>
</g>
<g filter="url(#b1)">
<path d="M555.8 478.3 C554.1 471.6 554.7 473.9 556.7 466.7 C558.7 459.5 557.3 462.1 561.7 456.7 C566.1 451.3 563.9 452.9 570.0 450.5 C576.1 448.1 573.3 449.5 580.0 449.5 C586.7 449.5 583.9 448.1 590.0 450.5 C596.1 452.9 594.4 450.8 598.3 456.7 C602.2 462.6 601.1 460.5 601.7 468.3 C602.3 476.1 602.8 474.4 600.0 480.0 C597.2 485.6 598.3 483.9 593.3 485.0 C588.3 486.1 590.0 484.4 585.0 483.3 C580.0 482.2 582.7 481.7 578.3 481.7 C573.9 481.7 577.2 481.6 571.7 483.3 C566.2 485.0 567.0 488.4 561.7 486.7 C556.4 485.0 557.5 485.0 555.8 478.3 Z" fill="#fafafa"/>
<path d="M574.0 456.0 C575.7 451.0 576.7 454.3 580.0 455.0 C583.3 455.7 583.0 453.0 584.0 458.0 C585.0 463.0 584.0 462.7 583.0 470.0 C582.0 477.3 583.0 476.7 581.0 480.0 C579.0 483.3 579.0 483.3 577.0 480.0 C575.0 476.7 576.0 478.0 575.0 470.0 C574.0 462.0 572.3 461.0 574.0 456.0 Z" fill="#e2e2e2"/>
<path d="M549.0 497.0 C549.7 493.3 549.0 494.2 553.0 492.0 C557.0 489.8 555.7 489.8 561.0 490.5 C566.3 491.2 564.7 490.5 569.0 494.0 C573.3 497.5 571.0 496.0 574.0 501.0 C577.0 506.0 575.7 502.7 578.0 509.0 C580.3 515.3 579.0 511.3 581.0 520.0 C583.0 528.7 582.8 527.0 584.0 535.0 C585.2 543.0 585.3 540.2 584.5 544.0 C583.7 547.8 583.7 546.5 581.7 546.5 C579.7 546.5 580.1 549.5 578.5 544.0 C576.9 538.5 578.8 539.0 577.0 530.0 C575.2 521.0 576.7 524.0 573.0 517.0 C569.3 510.0 571.0 512.5 566.0 509.0 C561.0 505.5 563.0 508.5 558.0 506.5 C553.0 504.5 554.0 506.2 551.0 503.0 C548.0 499.8 548.3 500.7 549.0 497.0 Z" fill="#fff"/>
<path d="M584.0 509.0 C585.7 498.7 584.7 504.5 588.0 499.0 C591.3 493.5 589.7 495.2 594.0 492.5 C598.3 489.8 596.8 490.2 601.0 491.0 C605.2 491.8 604.8 491.7 606.5 495.0 C608.2 498.3 608.2 497.3 606.0 501.0 C603.8 504.7 604.7 503.2 600.0 506.0 C595.3 508.8 596.3 506.2 592.0 509.5 C587.7 512.8 589.3 509.2 587.0 516.0 C584.7 522.8 586.3 525.3 585.0 530.0 C583.7 534.7 583.3 537.0 583.0 530.0 C582.7 523.0 582.3 519.3 584.0 509.0 Z" fill="#fff"/>
<path d="M497.5 385.0 C503.3 376.7 499.2 383.3 510.0 375.0 C520.8 366.7 519.2 364.2 530.0 360.0 C540.8 355.8 535.0 357.1 542.5 362.5 C550.0 367.9 550.8 366.2 552.5 376.2 C554.2 386.2 551.7 384.6 547.5 392.5 C543.3 400.4 547.5 396.7 540.0 400.0 C532.5 403.3 536.7 400.8 525.0 402.5 C513.3 404.2 515.8 405.8 505.0 405.0 C494.2 404.2 495.0 406.7 492.5 400.0 C490.0 393.3 491.7 393.3 497.5 385.0 Z" fill="#cdcdcd"/>
<path d="M492.5 400.0 C490.0 393.3 488.3 395.7 497.5 385.0 C506.7 374.3 510.5 371.7 520.0 368.0 C529.5 364.3 530.7 366.0 526.0 374.0 C521.3 382.0 501.3 385.3 506.0 392.0 C510.7 398.7 526.7 394.7 540.0 394.0 C553.3 393.3 546.0 388.0 546.0 390.0 C546.0 392.0 547.0 395.8 540.0 400.0 C533.0 404.2 536.7 400.8 525.0 402.5 C513.3 404.2 515.8 405.8 505.0 405.0 C494.2 404.2 495.0 406.7 492.5 400.0 Z" fill="#fff"/>
<path d="M460.0 405.0 C462.6 395.3 462.0 400.6 471.7 399.4 C481.4 398.2 478.2 402.9 489.2 401.4 C500.2 399.9 494.4 396.1 504.7 395.0 C515.0 393.9 515.5 394.6 520.0 398.0 C524.5 401.4 523.4 401.6 518.3 405.3 C513.2 409.0 511.8 404.7 504.7 409.2 C497.6 413.7 502.8 411.8 497.0 418.9 C491.2 426.0 493.1 424.1 487.2 430.6 C481.3 437.1 484.6 437.0 479.4 438.3 C474.2 439.6 476.9 437.7 471.7 434.5 C466.5 431.3 467.8 438.4 463.9 428.6 C460.0 418.8 457.4 414.7 460.0 405.0 Z" fill="#fff"/>
<path d="M451.0 437.5 C451.5 434.4 454.3 433.1 459.3 426.7 C464.3 420.3 464.0 424.7 466.0 418.3 C468.0 411.9 462.4 413.3 465.2 407.5 C468.0 401.7 466.8 403.3 474.3 400.8 C481.8 398.3 481.0 402.8 487.7 400.0 C494.4 397.2 489.3 397.8 494.3 392.5 C499.3 387.2 497.1 388.2 502.7 384.0 C508.3 379.8 507.2 374.7 511.0 380.0 C514.8 385.3 514.0 389.4 514.0 400.0 C514.0 410.6 515.1 406.4 511.0 411.7 C506.9 417.0 507.4 411.9 501.8 415.8 C496.2 419.7 498.2 417.5 494.3 423.3 C490.4 429.1 494.1 428.8 490.2 433.3 C486.3 437.8 488.0 439.5 482.7 436.7 C477.4 433.9 479.3 428.3 474.3 425.0 C469.3 421.7 473.2 423.0 467.7 426.7 C462.2 430.4 463.3 432.4 457.7 436.0 C452.1 439.6 450.5 440.6 451.0 437.5 Z" fill="#fff"/>
<path d="M392.7 422.0 C394.0 420.2 396.7 420.5 400.0 421.5 C403.3 422.5 404.0 423.2 402.7 425.0 C401.4 426.8 399.3 428.0 396.0 427.0 C392.7 426.0 391.4 423.8 392.7 422.0 Z" fill="#f0f0f0"/>
<path d="M373.8 391.2 C374.6 386.9 373.8 388.1 380.0 387.0 C386.2 385.9 385.4 385.3 392.5 388.0 C399.6 390.7 397.5 390.2 401.2 395.0 C405.0 399.8 400.0 398.3 403.8 402.5 C407.5 406.7 405.4 403.8 412.5 407.5 C419.6 411.2 417.5 408.8 425.0 413.8 C432.5 418.8 430.8 417.1 435.0 422.5 C439.2 427.9 439.2 427.1 437.5 430.0 C435.8 432.9 435.8 432.9 430.0 431.2 C424.2 429.6 427.5 429.2 420.0 425.0 C412.5 420.8 415.8 422.1 407.5 418.8 C399.2 415.4 402.5 418.8 395.0 415.0 C387.5 411.2 390.8 412.5 385.0 407.5 C379.2 402.5 381.2 405.4 377.5 400.0 C373.8 394.6 372.9 395.6 373.8 391.2 Z" fill="#fff"/>
<path d="M463.9 466.5 C465.9 463.9 466.5 464.0 471.7 465.6 C476.9 467.2 474.5 466.9 479.4 471.4 C484.3 475.9 483.7 474.3 486.3 479.2 C488.9 484.1 489.5 484.1 487.2 486.0 C484.9 487.9 484.6 487.3 479.4 485.0 C474.2 482.7 476.2 483.1 471.7 479.2 C467.2 475.3 468.4 477.6 465.8 473.4 C463.2 469.2 461.9 469.1 463.9 466.5 Z" fill="#fff"/>
<path d="M377.7 476.7 C376.0 470.0 376.5 472.2 379.3 465.0 C382.1 457.8 380.4 460.0 386.0 455.0 C391.6 450.0 389.3 450.0 396.0 450.0 C402.7 450.0 401.0 450.6 406.0 455.0 C411.0 459.4 407.1 458.3 411.0 463.3 C414.9 468.3 413.3 465.0 417.7 470.0 C422.1 475.0 420.4 472.2 424.3 478.3 C428.2 484.4 423.7 482.2 429.3 488.3 C434.9 494.4 431.5 491.7 441.0 496.7 C450.5 501.7 446.6 497.8 457.7 503.3 C468.8 508.8 465.4 507.2 474.3 513.3 C483.2 519.4 481.5 518.3 484.3 521.7 C487.1 525.1 488.2 525.6 482.7 523.5 C477.2 521.4 478.3 520.3 467.7 515.5 C457.1 510.7 461.0 511.8 451.0 509.0 C441.0 506.2 445.5 507.2 437.7 507.0 C429.9 506.8 432.2 506.2 427.7 508.3 C423.2 510.4 424.9 507.2 424.3 513.3 C423.7 519.4 423.8 518.9 426.0 526.7 C428.2 534.5 427.7 530.0 431.0 536.7 C434.3 543.4 434.9 541.2 436.0 546.7 C437.1 552.2 438.2 551.6 434.3 553.3 C430.4 555.0 429.3 555.0 424.3 551.7 C419.3 548.4 422.1 550.5 419.3 543.3 C416.5 536.1 418.8 538.9 416.0 530.0 C413.2 521.1 414.3 524.5 411.0 516.7 C407.7 508.9 408.2 513.9 406.0 506.7 C403.8 499.5 406.0 501.7 404.3 495.0 C402.6 488.3 404.9 490.0 401.0 486.7 C397.1 483.4 398.3 485.6 392.7 485.0 C387.1 484.4 389.3 487.8 384.3 485.0 C379.3 482.2 379.4 483.4 377.7 476.7 Z" fill="#fff"/>
<path d="M390.0 462.0 C392.0 459.0 392.0 459.3 396.0 460.0 C400.0 460.7 400.0 460.7 402.0 464.0 C404.0 467.3 404.0 467.0 402.0 470.0 C400.0 473.0 400.0 473.3 396.0 473.0 C392.0 472.7 392.0 472.7 390.0 469.0 C388.0 465.3 388.0 465.0 390.0 462.0 Z" fill="#d8d8d8"/>
<path d="M584.3 360.0 C590.4 353.3 591.0 355.5 604.3 358.3 C617.6 361.1 613.2 360.5 624.3 368.3 C635.4 376.1 629.9 373.4 637.7 381.7 C645.5 390.0 645.5 385.5 647.7 393.3 C649.9 401.1 651.0 403.3 644.3 405.0 C637.6 406.7 641.0 403.9 627.7 398.3 C614.4 392.7 618.2 395.0 604.3 388.3 C590.4 381.6 592.7 387.7 586.0 378.3 C579.3 368.9 578.2 366.7 584.3 360.0 Z" fill="#9c9c9c"/>
<path d="M603.0 384.5 C606.0 383.0 603.7 381.7 612.0 384.0 C620.3 386.3 616.7 386.5 628.0 391.5 C639.3 396.5 640.3 394.3 646.0 399.0 C651.7 403.7 651.0 405.3 645.0 405.5 C639.0 405.7 639.0 403.8 628.0 399.5 C617.0 395.2 620.3 396.2 612.0 392.5 C603.7 388.8 606.0 391.2 603.0 388.5 C600.0 385.8 600.0 386.0 603.0 384.5 Z" fill="#fff"/>
<path d="M627.0 372.0 C626.3 368.3 627.0 368.0 632.0 372.0 C637.0 376.0 636.3 376.0 642.0 384.0 C647.7 392.0 647.7 389.3 649.0 396.0 C650.3 402.7 649.0 404.0 646.0 404.0 C643.0 404.0 644.0 403.0 640.0 396.0 C636.0 389.0 638.3 391.0 634.0 383.0 C629.7 375.0 627.7 375.7 627.0 372.0 Z" fill="#f6f6f6"/>
<path d="M649.3 416.7 C650.4 412.9 651.0 413.6 656.0 413.6 C661.0 413.6 658.6 413.2 664.3 416.7 C670.0 420.2 667.4 417.2 673.0 424.0 C678.6 430.8 680.0 430.7 681.0 437.0 C682.0 443.3 680.3 442.3 676.0 443.0 C671.7 443.7 673.0 442.2 668.0 439.0 C663.0 435.8 666.1 438.0 661.0 433.3 C655.9 428.6 656.6 430.5 652.7 425.0 C648.8 419.5 648.2 420.5 649.3 416.7 Z" fill="#fff"/>
<path d="M673.9 463.6 C676.5 459.1 676.5 460.4 683.6 457.8 C690.7 455.2 690.7 453.9 695.3 455.8 C699.9 457.7 698.6 457.7 697.3 463.6 C696.0 469.5 696.6 467.6 691.4 473.4 C686.2 479.2 687.5 477.9 681.7 481.1 C675.9 484.3 677.1 484.4 673.9 483.1 C670.7 481.8 671.3 481.1 672.0 477.2 C672.7 473.3 675.3 475.9 675.9 471.4 C676.5 466.9 671.3 468.1 673.9 463.6 Z" fill="#fff"/>
<path d="M696.3 423.3 C700.7 422.2 700.8 422.2 708.0 425.0 C715.2 427.8 715.8 427.8 718.0 431.7 C720.2 435.6 719.7 436.7 714.7 436.7 C709.7 436.7 709.7 434.5 703.0 431.7 C696.3 428.9 696.9 431.1 694.7 428.3 C692.5 425.5 691.9 424.4 696.3 423.3 Z" fill="#cccccc"/>
<path d="M733.0 483.3 C735.8 477.7 733.6 479.4 738.0 473.3 C742.4 467.2 740.2 469.2 746.3 465.0 C752.4 460.8 749.1 461.6 756.3 460.8 C763.5 460.0 762.4 459.4 768.0 462.5 C773.6 465.6 771.6 464.7 773.0 470.0 C774.4 475.3 774.4 473.9 772.2 478.3 C770.0 482.7 771.6 481.5 766.3 483.3 C761.0 485.1 761.6 482.6 756.3 483.8 C751.0 485.0 753.6 483.3 750.5 487.0 C747.4 490.7 748.7 488.4 747.0 495.0 C745.3 501.6 746.0 498.4 745.5 506.7 C745.0 515.0 746.3 511.1 745.5 520.0 C744.7 528.9 744.9 524.4 743.0 533.3 C741.1 542.2 742.5 540.6 739.7 546.7 C736.9 552.8 738.9 550.3 734.7 551.7 C730.5 553.1 730.0 552.5 727.2 550.8 C724.4 549.1 725.2 551.4 726.3 546.7 C727.4 542.0 728.8 544.5 730.5 536.7 C732.2 528.9 732.1 530.9 731.3 523.3 C730.5 515.7 730.8 518.3 728.0 514.0 C725.2 509.7 729.7 511.2 723.0 510.5 C716.3 509.8 718.0 510.3 708.0 512.0 C698.0 513.7 702.4 513.3 693.0 515.5 C683.6 517.7 684.7 518.2 679.7 518.6 C674.7 519.0 674.7 519.6 678.0 516.7 C681.3 513.8 681.4 514.5 689.7 510.0 C698.0 505.5 694.1 506.6 703.0 503.3 C711.9 500.0 709.1 502.2 716.3 500.0 C723.5 497.8 720.2 500.0 724.7 496.7 C729.2 493.4 726.9 494.5 729.7 490.0 C732.5 485.5 730.2 488.9 733.0 483.3 Z" fill="#fff"/>
<ellipse cx="753" cy="472" rx="3.2" ry="2.2" fill="#b4b4b4"/><circle cx="751.3" cy="490" r="2" fill="#c0c0c0"/>
</g>
<rect x="351" y="330" width="462" height="265" filter="url(#grain)" style="mix-blend-mode:overlay" opacity="0.55"/>
</g>
<g fill="none" stroke="#a6a6a6" stroke-width="0.85"><path d="M351 598.5 Q410 624 467 640"/><path d="M685 640 Q752 620 813 596"/></g>
<!-- CT-END -->
</g>
<!-- dividers -->
<rect x="813" y="124" width="1" height="568" fill="#c8c8c8"/>
<rect x="1044" y="124" width="1" height="568" fill="#c8c8c8"/>
<!-- STRIPS -->
<defs><linearGradient id="g2" gradientUnits="userSpaceOnUse" x1="899.0" y1="0" x2="1017.1" y2="0"><stop offset="0.0000" stop-color="#202020"/><stop offset="0.0298" stop-color="#6a6a6a"/><stop offset="0.0714" stop-color="#8e8e8e"/><stop offset="0.1131" stop-color="#b4b4b4"/><stop offset="0.1512" stop-color="#a0a0a0"/><stop offset="0.1786" stop-color="#5a5a5a"/><stop offset="0.2024" stop-color="#303030"/><stop offset="0.2321" stop-color="#1a1a1a"/><stop offset="0.2560" stop-color="#000"/><stop offset="0.3060" stop-color="#000"/><stop offset="0.3155" stop-color="#8a8a8a"/><stop offset="0.3333" stop-color="#5a5a5a"/><stop offset="0.3488" stop-color="#111"/><stop offset="0.3631" stop-color="#6a6a6a"/><stop offset="0.3810" stop-color="#d8d8d8"/><stop offset="0.4345" stop-color="#f0f0f0"/><stop offset="0.4881" stop-color="#e0e0e0"/><stop offset="0.5238" stop-color="#8c8c8c"/><stop offset="0.5774" stop-color="#787878"/><stop offset="0.6131" stop-color="#b0b0b0"/><stop offset="0.6488" stop-color="#f4f4f4"/><stop offset="0.7798" stop-color="#fafafa"/><stop offset="0.8095" stop-color="#b0b0b0"/><stop offset="0.8393" stop-color="#8a8a8a"/><stop offset="0.8869" stop-color="#6e6e6e"/><stop offset="0.9464" stop-color="#5a5a5a"/><stop offset="1.0000" stop-color="#3a3a3a"/></linearGradient>
<linearGradient id="g3" gradientUnits="userSpaceOnUse" x1="1044.7" y1="0" x2="1275.9" y2="0"><stop offset="0.0000" stop-color="#7c7c7c"/><stop offset="0.0365" stop-color="#6a6a6a"/><stop offset="0.0608" stop-color="#3c3c3c"/><stop offset="0.0787" stop-color="#2c2c2c"/><stop offset="0.0892" stop-color="#f0f0f0"/><stop offset="0.1298" stop-color="#fafafa"/><stop offset="0.1517" stop-color="#d0d0d0"/><stop offset="0.1622" stop-color="#4a4a4a"/><stop offset="0.1906" stop-color="#5e5e5e"/><stop offset="0.2230" stop-color="#6c6c6c"/><stop offset="0.2433" stop-color="#9a9a9a"/><stop offset="0.2555" stop-color="#f4f4f4"/><stop offset="0.3366" stop-color="#fafafa"/><stop offset="0.3463" stop-color="#4a4a4a"/><stop offset="0.3674" stop-color="#3a3a3a"/><stop offset="0.3771" stop-color="#8a8a8a"/><stop offset="0.4015" stop-color="#9a9a9a"/><stop offset="0.4136" stop-color="#f0f0f0"/><stop offset="0.4242" stop-color="#e0e0e0"/><stop offset="0.4307" stop-color="#4a4a4a"/><stop offset="0.4582" stop-color="#3c3c3c"/><stop offset="0.4663" stop-color="#000"/><stop offset="0.5109" stop-color="#000"/><stop offset="0.5191" stop-color="#8a8a8a"/><stop offset="0.5393" stop-color="#c8c8c8"/><stop offset="0.5596" stop-color="#9a9a9a"/><stop offset="0.5677" stop-color="#303030"/><stop offset="0.6245" stop-color="#2a2a2a"/><stop offset="0.6310" stop-color="#f0f0f0"/><stop offset="0.6732" stop-color="#f4f4f4"/><stop offset="0.6813" stop-color="#787878"/><stop offset="0.7502" stop-color="#6c6c6c"/><stop offset="0.8191" stop-color="#747474"/><stop offset="0.8313" stop-color="#505050"/><stop offset="0.8637" stop-color="#484848"/><stop offset="0.8921" stop-color="#404040"/><stop offset="0.9043" stop-color="#7a7a7a"/><stop offset="0.9530" stop-color="#808080"/><stop offset="1.0000" stop-color="#6e6e6e"/></linearGradient>
<linearGradient id="gv" x1="0" y1="0" x2="0" y2="1"><stop offset="0" stop-color="#000" stop-opacity=".25"/><stop offset=".25" stop-color="#000" stop-opacity="0"/><stop offset=".75" stop-color="#000" stop-opacity="0"/><stop offset="1" stop-color="#000" stop-opacity=".3"/></linearGradient>
<filter id="bs" x="-2%" y="-20%" width="104%" height="140%"><feGaussianBlur stdDeviation="0.6"/></filter></defs>
<g filter="url(#bs)">
<path d="M904.6 400 L1005.2 400 L1007.3 408.5 L1011.5 408.5 L1017.1 416.8 L899.0 416.8 L901.1 408.5 Z" fill="url(#g2)"/>
<path d="M922.2 400 L935.1 400 L939.1 416.8 L929.5 416.8 Z" fill="#000"/>
<path d="M935.1 400 L936.5 400 L940.2 416.8 L939.1 416.8 Z" fill="#8c8c8c"/>
<path d="M936.5 400 L941.9 400 L941.9 416.8 L940.2 416.8 Z" fill="#0a0a0a"/>
<path d="M960.9 400 L971.4 400 L980.5 416.8 L964.4 416.8 Z" fill="#8a8a8a"/>
<path d="M992.5 400 L1005.2 400 L1006.6 416.8 L998.8 416.8 Z" fill="#8a8a8a"/>
<rect x="1044.7" y="400" width="231.2" height="16.8" fill="url(#g3)"/>
<path d="M1077.5 400 L1085.0 400 L1080.3 416.8 L1073.8 416.8 Z" fill="#3a3a3a"/>
<path d="M1101.9 400 L1105.6 400 L1101.9 416.8 L1096.3 416.8 Z" fill="#f4f4f4"/>
<path d="M1122.5 400 L1128.1 400 L1128.1 416.8 L1115.0 416.8 Z" fill="#2c2c2c"/>
<path d="M1189.1 408 L1192.3 408 L1192.3 416.8 L1189.1 416.8 Z" fill="#2c2c2c"/>
<path d="M1197.1 408 L1202.4 408 L1202.4 416.8 L1197.1 416.8 Z" fill="#6c6c6c"/>
</g>
<!-- /STRIPS -->
<!-- crosshairs -->
<g fill="#cab375">
<rect x="582" y="124" width="1" height="273"/><rect x="582" y="421" width="1" height="271"/>
<rect x="351" y="409" width="219" height="1"/><rect x="594" y="409" width="219" height="1"/>
<rect x="929" y="124" width="1" height="273"/><rect x="929" y="421" width="1" height="271"/>
<rect x="814" y="409" width="103" height="1"/><rect x="941" y="409" width="103" height="1"/>
<rect x="1161" y="124" width="1" height="273"/><rect x="1161" y="421" width="1" height="271"/>
<rect x="1045" y="409" width="104" height="1"/><rect x="1173" y="409" width="103" height="1"/>
</g>
<g fill="#a04810" fill-opacity=".42">
<rect x="583" y="124" width="1" height="273"/><rect x="583" y="421" width="1" height="271"/>
<rect x="351" y="408" width="219" height="1"/><rect x="594" y="408" width="219" height="1"/>
<rect x="930" y="124" width="1" height="273"/><rect x="930" y="421" width="1" height="271"/>
<rect x="814" y="408" width="103" height="1"/><rect x="941" y="408" width="103" height="1"/>
<rect x="1162" y="124" width="1" height="273"/><rect x="1162" y="421" width="1" height="271"/>
<rect x="1045" y="408" width="104" height="1"/><rect x="1173" y="408" width="103" height="1"/>
</g>
</svg>
<div class="step" style="left:9px;top:214px">3</div>
</div>
<div class="abs" style="left:0;top:647px;width:929px;height:28px;background:#fff"></div>
<div class="sl" style="left:0;width:462px"><div class="tr" style="left:12px;width:394px"></div><div class="th" style="left:199px"><i></i></div><div class="bt" style="left:418px"></div>
<svg class="abs" style="left:418px;top:2px" width="39" height="20" viewBox="0 0 39 20"><g fill="none" stroke="#808080" stroke-width="1.2"><polyline points="13.2,5 7.2,10 13.2,15"/><polyline points="25.8,5 31.8,10 25.8,15"/></g></svg></div>
<div class="sl" style="left:464px;width:229px"><div class="tr" style="left:12px;width:161px"></div><div class="th" style="left:83px"><i></i></div><div class="bt" style="left:185px"></div>
<svg class="abs" style="left:185px;top:2px" width="39" height="20" viewBox="0 0 39 20"><g fill="none" stroke="#808080" stroke-width="1.2"><polyline points="13.2,5 7.2,10 13.2,15"/><polyline points="25.8,5 31.8,10 25.8,15"/></g></svg></div>
<div class="sl" style="left:695px;width:230px"><div class="tr" style="left:12px;width:162px"></div><div class="th" style="left:83px"><i></i></div><div class="bt" style="left:186px"></div>
<svg class="abs" style="left:186px;top:2px" width="39" height="20" viewBox="0 0 39 20"><g fill="none" stroke="#808080" stroke-width="1.2"><polyline points="13.2,5 7.2,10 13.2,15"/><polyline points="25.8,5 31.8,10 25.8,15"/></g></svg></div>

</div>
</body>
</html>
